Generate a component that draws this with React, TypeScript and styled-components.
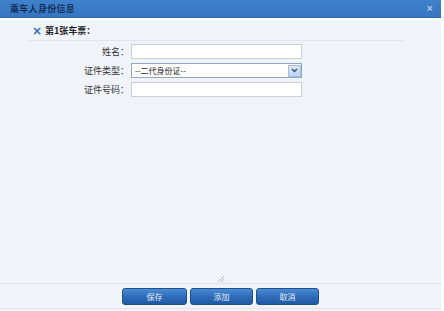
import React from 'react'
import styled, { createGlobalStyle } from 'styled-components'

const GlobalStyle = createGlobalStyle`
  html, body {
    margin: 0;
    padding: 0;
    background: #ffffff;
    font-family: "Noto Sans CJK SC", "Liberation Sans", sans-serif;
  }
`

const Dialog = styled.div`
  width: 441px;
  height: 311px;
  display: flex;
  flex-direction: column;
  background: #f0f4f9;
  border-right: 3px solid #fdfdfd;
`

const TitleBar = styled.div`
  height: 17px;
  background: linear-gradient(#3f82cb, #3675c0);
  display: flex;
  align-items: center;
  justify-content: space-between;
  padding: 0 8px 0 10px;
  border-bottom: 1px solid #2f68ad;
`

const Title = styled.span`
  font-size: 9px;
  font-weight: bold;
  color: #14305a;
  letter-spacing: 0.3px;
`

const Close = styled.span`
  font-size: 11px;
  color: #a9c6e8;
  font-family: "Liberation Sans", sans-serif;
  font-weight: bold;
  line-height: 1;
`

const Body = styled.div`
  flex: 1;
  display: flex;
  flex-direction: column;
  padding: 4px 0 0 28px;
  border-top: 2px solid #fafcfe;
`

const Section = styled.div`
  width: 372px;
  height: 13px;
  display: flex;
  align-items: center;
  gap: 3px;
  padding: 0 0 3px 4px;
  border-bottom: 1px solid #dfe5ec;
`

const SectionX = styled.span`
  color: #2e6cc0;
  font-family: "DejaVu Sans", sans-serif;
  font-weight: bold;
  font-size: 12px;
  line-height: 1;
`

const SectionTitle = styled.span`
  font-size: 9px;
  font-weight: bold;
  color: #222;
`

const Form = styled.div`
  display: grid;
  grid-template-columns: 101px 171px;
  column-gap: 2px;
  row-gap: 4px;
  margin-top: 3px;
`

const Label = styled.label`
  font-size: 9px;
  color: #333;
  text-align: right;
  align-self: center;
`

const Input = styled.div`
  height: 13px;
  background: #fff;
  border: 1px solid #c9d0d8;
`

const Select = styled.div`
  height: 13px;
  background: #fff;
  border: 1px solid #8ea7c8;
  display: flex;
  align-items: center;
  justify-content: space-between;
  padding-left: 3px;
  font-size: 8px;
  color: #222;
`

const Arrow = styled.span`
  width: 13px;
  height: 12px;
  margin-right: 0;
  background: linear-gradient(#dbe6f7, #c2d4ef);
  border: 1px solid #a9bfe0;
  display: flex;
  align-items: center;
  justify-content: center;
  box-sizing: border-box;
`

const Spacer = styled.div`
  flex: 1;
  display: flex;
  align-items: flex-end;
  justify-content: center;
  padding-right: 28px;
`

const Footer = styled.div`
  height: 24px;
  border-top: 1px solid #dde3ea;
  border-bottom: 1px solid #dde3ea;
  margin-bottom: 2px;
  display: flex;
  justify-content: center;
  align-items: center;
  gap: 3px;
`

const Button = styled.button<{ $w: number }>`
  width: ${(p) => p.$w}px;
  height: 17px;
  border: 1px solid #1d4f8e;
  border-radius: 3px;
  background: linear-gradient(#4a8bd6, #2d6ab6 55%, #1f5aa4);
  color: #e4eefa;
  font-size: 8px;
  font-family: "Noto Sans CJK SC", sans-serif;
  padding: 0;
`

const App: React.FC = () => {
  return (
    <Dialog>
      <GlobalStyle />
      <TitleBar>
        <Title>乘车人身份信息</Title>
        <Close>×</Close>
      </TitleBar>
      <Body>
        <Section>
          <SectionX>×</SectionX>
          <SectionTitle>第1张车票：</SectionTitle>
        </Section>
        <Form>
          <Label>姓名：</Label>
          <Input />
          <Label>证件类型：</Label>
          <Select>
            --二代身份证--
            <Arrow>
              <svg width="7" height="5" viewBox="0 0 7 5">
                <path d="M1 1 L3.5 3.5 L6 1" stroke="#2a4f8a" strokeWidth="1.5" fill="none" />
              </svg>
            </Arrow>
          </Select>
          <Label>证件号码：</Label>
          <Input />
        </Form>
        <Spacer>
          <svg width="8" height="8" viewBox="0 0 8 8">
            <path d="M7 1 L1 7 M7 4 L4 7 M7 6.5 L6.5 7" stroke="#a0a8b0" strokeWidth="0.8" />
          </svg>
        </Spacer>
      </Body>
      <Footer>
        <Button $w={65}>保存</Button>
        <Button $w={63}>添加</Button>
        <Button $w={63}>取消</Button>
      </Footer>
    </Dialog>
  )
}

export default App
